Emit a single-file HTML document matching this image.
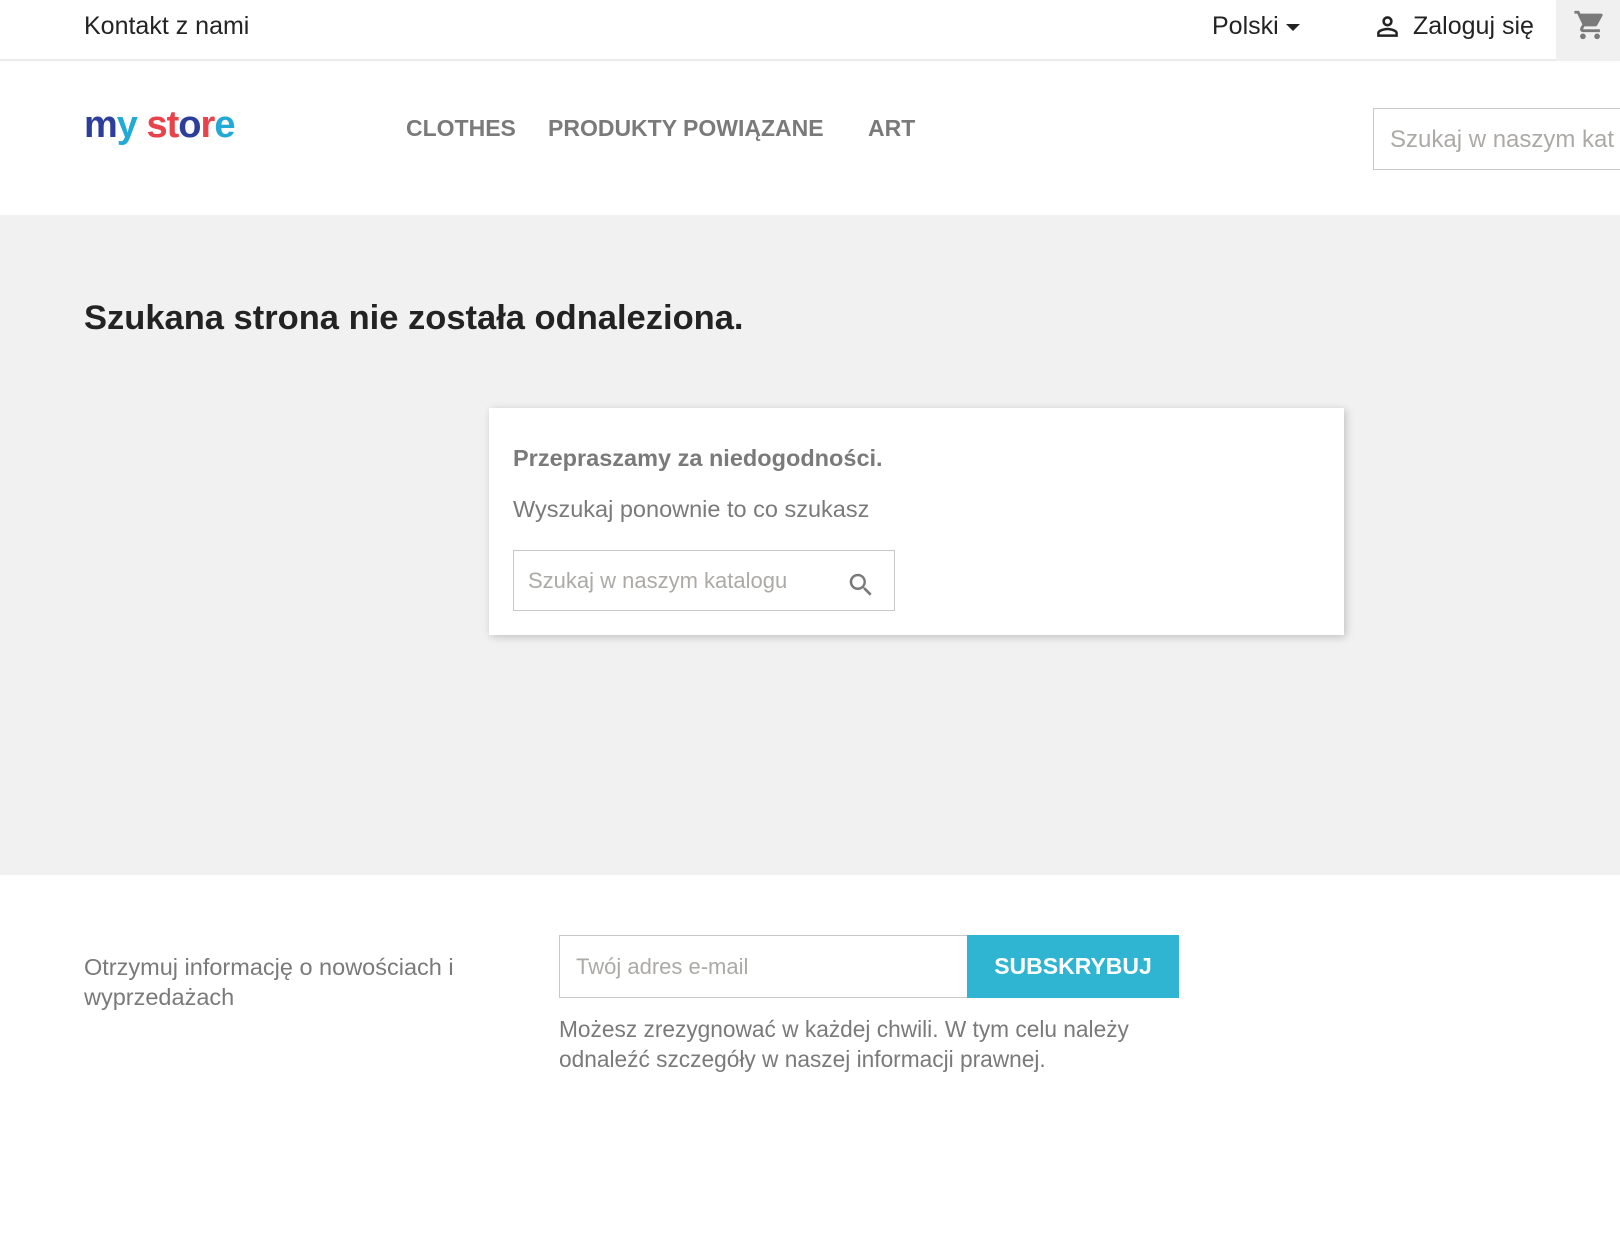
<!DOCTYPE html>
<html><head><meta charset="utf-8"><style>
*{box-sizing:border-box;margin:0;padding:0}
body{width:1620px;height:1256px;overflow:hidden;font-family:"Liberation Sans",sans-serif;background:#fff;color:#232323;position:relative}
.a{position:absolute;white-space:nowrap}
</style></head><body>
<div class="a" style="left:0;top:0;width:1620px;height:61px;background:#fff;border-bottom:2px solid #ececec"></div>
<div class="a" style="left:84px;top:12px;font-size:25px">Kontakt z nami</div>
<div class="a" style="left:1212px;top:12px;font-size:25px">Polski</div>
<div class="a" style="left:1286px;top:24px;width:0;height:0;border-left:7px solid transparent;border-right:7px solid transparent;border-top:7px solid #232323"></div>
<svg class="a" style="left:1372px;top:11px" width="31" height="31" viewBox="0 0 24 24"><path fill="#232323" d="M12 4a4 4 0 1 1 0 8 4 4 0 0 1 0-8zm0 2a2 2 0 1 0 0 4 2 2 0 0 0 0-4zm0 7c2.7 0 8 1.3 8 4v3H4v-3c0-2.7 5.3-4 8-4zm0 1.9c-3 0-6.1 1.5-6.1 2.1v1.1h12.2V17c0-.6-3.1-2.1-6.1-2.1z"/></svg>
<div class="a" style="left:1413px;top:12px;font-size:25px">Zaloguj się</div>
<div class="a" style="left:1556px;top:0;width:64px;height:61px;background:#f0f0f0"></div>
<svg class="a" style="left:1573px;top:8px" width="34" height="34" viewBox="0 0 24 24"><path fill="#7a7a7a" d="M7 18a2 2 0 1 0 0 4 2 2 0 0 0 0-4zM1 2v2h2l3.6 7.6-1.4 2.4c-.1.3-.2.6-.2 1 0 1.1.9 2 2 2h12v-2H7.4a.25.25 0 0 1-.2-.4l.9-1.6h7.4c.8 0 1.4-.4 1.7-1l3.6-6.5A1 1 0 0 0 20 4H5.2l-.9-2H1zm16 16a2 2 0 1 0 0 4 2 2 0 0 0 0-4z"/></svg>
<div class="a" style="left:0;top:63px;width:1620px;height:152px;background:#fff;box-shadow:0 2px 4px rgba(0,0,0,.12)"></div>
<div class="a" style="left:84px;top:104px;font-size:38px;font-weight:bold;letter-spacing:-1px;font-family:'Liberation Sans',sans-serif"><span style="color:#2c3e9a">m</span><span style="color:#22a9d6">y</span> <span style="color:#e8424a">s</span><span style="color:#e8424a">t</span><span style="color:#2c3e9a">o</span><span style="color:#e8424a">r</span><span style="color:#22a9d6">e</span></div>
<div class="a" style="left:406px;top:115px;font-size:23px;font-weight:bold;color:#7a7a7a">CLOTHES</div>
<div class="a" style="left:548px;top:115px;font-size:23px;font-weight:bold;color:#7a7a7a">PRODUKTY POWIĄZANE</div>
<div class="a" style="left:868px;top:115px;font-size:23px;font-weight:bold;color:#7a7a7a">ART</div>
<div class="a" style="left:1373px;top:108px;width:260px;height:62px;border:1px solid #c8c8c8;background:#fff"></div>
<div class="a" style="left:1390px;top:126px;font-size:24px;color:#acaaa6">Szukaj w naszym kat</div>
<div class="a" style="left:0;top:215px;width:1620px;height:660px;background:#f1f1f1"></div>
<div class="a" style="left:84px;top:299px;font-size:34.5px;font-weight:bold;color:#232323">Szukana strona nie została odnaleziona.</div>
<div class="a" style="left:489px;top:408px;width:855px;height:227px;background:#fff;box-shadow:2px 2px 8px rgba(0,0,0,.2)"></div>
<div class="a" style="left:513px;top:445px;font-size:23.5px;font-weight:bold;color:#7a7a7a">Przepraszamy za niedogodności.</div>
<div class="a" style="left:513px;top:496px;font-size:23.5px;color:#7a7a7a">Wyszukaj ponownie to co szukasz</div>
<div class="a" style="left:513px;top:550px;width:382px;height:61px;border:1px solid #c8c8c8;background:#fff"></div>
<div class="a" style="left:528px;top:568px;font-size:22px;color:#acaaa6">Szukaj w naszym katalogu</div>
<svg class="a" style="left:846px;top:570px" width="30" height="30" viewBox="0 0 24 24"><path fill="#7a7a7a" d="M15.5 14h-.8l-.3-.3A6.5 6.5 0 1 0 9.5 16a6.5 6.5 0 0 0 4.2-1.6l.3.3v.8l5 5 1.5-1.5-5-5zm-6 0a4.5 4.5 0 1 1 0-9 4.5 4.5 0 0 1 0 9z"/></svg>
<div class="a" style="left:84px;top:952px;font-size:23.5px;color:#7a7a7a;line-height:30px">Otrzymuj informację o nowościach i<br>wyprzedażach</div>
<div class="a" style="left:559px;top:935px;width:409px;height:63px;border:1px solid #c8c8c8;background:#fff"></div>
<div class="a" style="left:576px;top:954px;font-size:22px;color:#acaaa6">Twój adres e-mail</div>
<div class="a" style="left:967px;top:935px;width:212px;height:63px;background:#2fb5d2;color:#fff;font-size:23px;font-weight:bold;text-align:center;line-height:63px">SUBSKRYBUJ</div>
<div class="a" style="left:559px;top:1014px;font-size:22.7px;color:#7a7a7a;line-height:30px">Możesz zrezygnować w każdej chwili. W tym celu należy<br>odnaleźć szczegóły w naszej informacji prawnej.</div>
</body></html>
